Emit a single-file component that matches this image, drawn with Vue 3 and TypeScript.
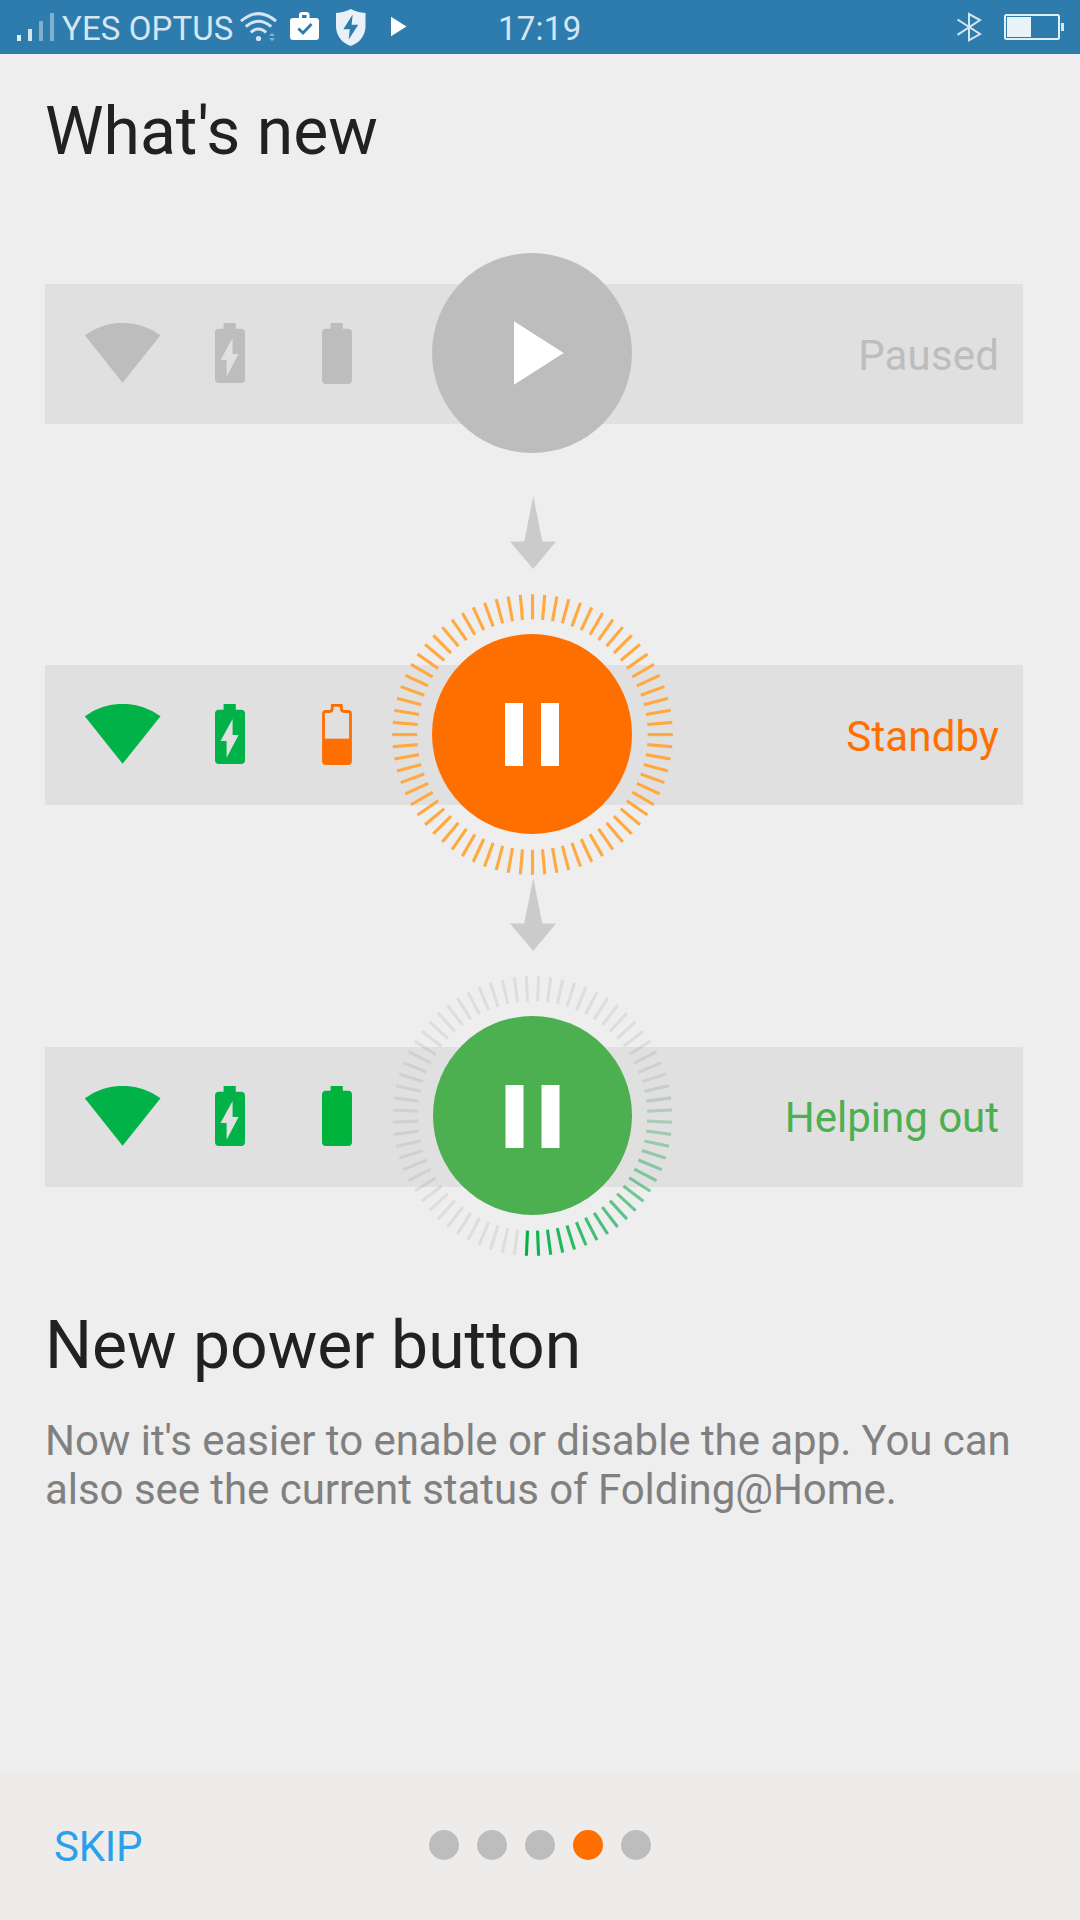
<script setup lang="ts">
type State = 'paused' | 'standby' | 'active'

interface Row {
  state: State
  label: string
  color: string
  wifi: string
  charge: string
  battery: string
  cy: number
  r: number
  dx: number
}

interface Tick {
  angle: number
  color: string
  opacity: number
}

const GREEN = '#00b248'
const GREY = '#bdbdbd'

const rows: Row[] = [
  { state: 'paused', label: 'Paused', color: GREY, wifi: GREY, charge: GREY, battery: GREY, cy: 140, r: 100, dx: 0 },
  { state: 'standby', label: 'Standby', color: '#ff6f00', wifi: GREEN, charge: GREEN, battery: '#ff6f00', cy: 140, r: 100, dx: 0 },
  { state: 'active', label: 'Helping out', color: '#4caf50', wifi: GREEN, charge: GREEN, battery: '#00b33c', cy: 139.5, r: 99.5, dx: 0.5 },
]

const standbyTicks: Tick[] = Array.from({ length: 72 }, (_, i) => ({ angle: i * 5, color: '#ffa940', opacity: 1 }))

// Grey base ring, with a green tail fading counter-clockwise from the bottom.
const baseTicks: Tick[] = Array.from({ length: 72 }, (_, i) => ({ angle: i * 5 + 2.5, color: '#000', opacity: 0.07 }))
const tailTicks: Tick[] = Array.from({ length: 22 }, (_, i) => ({ angle: 182.5 - i * 5, color: GREEN, opacity: 1 - i / 22 }))
const activeTicks: Tick[] = [...baseTicks.filter((t) => t.angle < 75 || t.angle > 183), ...tailTicks,
  ...baseTicks.filter((t) => t.angle >= 75 && t.angle <= 183).map((t) => ({ ...t, opacity: 0.07 * ((183 - t.angle) / 108) }))]

function ticksFor(state: State): Tick[] {
  if (state === 'standby') return standbyTicks
  if (state === 'active') return activeTicks
  return []
}

const pages = [0, 1, 2, 3, 4]
const currentPage = 3
</script>

<template>
  <div class="screen">
    <header class="status">
      <svg class="signal" width="38" height="54" viewBox="0 0 38 54">
        <rect x="0" y="35" width="4" height="6" fill="#e3eef5" />
        <rect x="11" y="29" width="4" height="12" fill="#d6e6f0" />
        <rect x="22" y="21" width="4" height="20" fill="#7fb0cf" />
        <rect x="33" y="13" width="4" height="28" fill="#7fb0cf" />
      </svg>
      <span class="carrier">YES OPTUS</span>
      <svg class="wifi-status" width="38" height="54" viewBox="240 0 38 54" fill="none" stroke="#d5e6f1" stroke-width="3">
        <path d="M241 21.2Q258.500 6 276 21.200" />
        <path d="M245.800 26.600Q258.500 15.900 271.200 26.600" />
        <path d="M250.800 32.300Q258.500 25.600 266.200 32.300" />
        <circle cx="258.500" cy="38.500" r="2.600" fill="#d5e6f1" stroke="none" />
        <path d="M269 36l3-3.200 3 3.200zM269 38l3 3.200 3-3.200z" fill="#7fb0cf" stroke="none" />
      </svg>
      <svg class="bag" width="29" height="54" viewBox="290 0 29 54">
        <path fill="#fff" fill-rule="evenodd" d="M299 18v-3q0-3 3-3h4.500q3 0 3 3v3h6.500q3 0 3 3v16q0 3-3 3h-23q-3 0-3-3v-16q0-3 3-3zM302 18h4.500v-3h-4.500z" />
        <path d="M298.300 28.500l4.700 4.500 8.500-9" fill="none" stroke="#2e7cad" stroke-width="2.800" />
      </svg>
      <svg class="shield" width="30" height="54" viewBox="336 0 30 54">
        <path fill="#e9f0f7" d="M350.700 9Q357 12.500 365.500 13v14C365 36.500 358.500 43.500 350.700 46C343 43.500 336.500 36.500 336 27V13Q344.500 12.500 350.700 9z" />
        <path fill="#2e7cad" d="M352.700 14.500L343.300 29.200H349.800L348.700 39.500L358.300 24.800H351.600z" />
      </svg>
      <svg class="play-status" width="16" height="54" viewBox="391 0 16 54"><path fill="#fff" d="M391 16.800L406.500 26.500L391 36.300z" /></svg>
      <span class="clock">17:19</span>
      <svg class="bluetooth" width="26" height="54" viewBox="956 0 26 54">
        <path d="M957.500 19.500L980 34L969 40.300V14L980 20L957.500 34.800" fill="none" stroke="#d5e6f1" stroke-width="2" />
      </svg>
      <svg class="power" width="62" height="54" viewBox="1003 0 62 54">
        <rect x="1005" y="15" width="54" height="24" rx="1.500" fill="none" stroke="#e3eef6" stroke-width="2" />
        <rect x="1007" y="17" width="24" height="20" fill="#e9f1f9" />
        <rect x="1061" y="23" width="3" height="8" fill="#d5e6f1" />
      </svg>
    </header>

    <main class="content">
      <h1>What's new</h1>

      <section class="states">
        <template v-for="(row, i) in rows" :key="row.state">
          <div class="row">
            <svg class="icons" width="272" height="62" viewBox="85 323 272 62">
              <path :fill="row.wifi" d="M84.800 335.300A63.800 63.800 0 0 1 160.500 335.300L122.600 382.800z" />
              <path :fill="row.charge" fill-rule="evenodd" d="M223.600 323h12.200v5.800h5.200q4 0 4 4V379q0 4-4 4H219q-4 0-4-4V332.800q0-4 4-4h4.600zM232.600 338L220.500 360H226.600V376.800L238.600 354H232.600z" />
              <g v-if="row.state === 'standby'">
                <path fill="none" :stroke="row.battery" stroke-width="2.800" d="M332.300 324.400h9v2.600q0 3.500 3 3.500h4q2.200 0 2.200 2.200V380q0 2.500-2.500 2.500H326q-2.500 0-2.500-2.500V332.700q0-2.200 2.200-2.200h4q2.600 0 2.600-3.500z" />
                <rect x="323" y="357.700" width="28" height="24.500" :fill="row.battery" />
              </g>
              <path v-else :fill="row.battery" :transform="row.state === 'active' ? 'translate(0 -1)' : undefined" d="M330.600 323h12.200v5.800h5.200q4 0 4 4V380q0 4-4 4H326q-4 0-4-4V332.800q0-4 4-4h4.600z" />
            </svg>

            <svg class="dial" width="282" height="282" viewBox="0 0 282 282">
              <line
                v-for="(t, n) in ticksFor(row.state)"
                :key="n"
                x1="141.500"
                x2="141.500"
                y1="0.300"
                y2="25.400"
                :stroke="t.color"
                :stroke-opacity="t.opacity"
                stroke-width="3.100"
                :transform="`rotate(${t.angle} 141.500 ${row.cy + 0.6})`"
              />
              <circle :cx="141 + row.dx" :cy="row.cy" :r="row.r" :fill="row.color" />
              <path v-if="row.state === 'paused'" fill="#fff" d="M123 108.300L172.700 140L123 171.700z" />
              <path v-else fill="#fff" :transform="`translate(${row.dx} 0)`" d="M114 109h18v63h-18zM150 109h18v63h-18z" />
            </svg>

            <span class="label" :class="row.state" :style="{ color: row.color }">{{ row.label }}</span>
          </div>
          <div v-if="i < rows.length - 1" class="between">
            <svg width="46" height="73" viewBox="0 0 46 73"><path fill="#cbcbcb" d="M23.300 0L32.300 45.500H46L23.200 73L0 45.500H14.200z" /></svg>
          </div>
        </template>
      </section>

      <h2>New power button</h2>
      <p>Now it's easier to enable or disable the app. You can<br />also see the current status of Folding@Home.</p>
    </main>

    <footer class="footer">
      <span class="skip">SKIP</span>
      <div class="dots">
        <i v-for="p in pages" :key="p" :class="{ on: p === currentPage }"></i>
      </div>
    </footer>
  </div>
</template>

<style>
body {
  margin: 0;
}
</style>

<style scoped>
.screen {
  display: flex;
  flex-direction: column;
  width: 1080px;
  height: 1920px;
  overflow: hidden;
  background: #eee;
  color: #212121;
  font-family: Roboto, sans-serif;
}
svg {
  display: block;
  flex: none;
}
.status {
  display: flex;
  flex: none;
  height: 54px;
  padding-left: 17px;
  background: #2e7cad;
  color: #d5e6f1;
  font-size: 33px;
  line-height: 58px;
  white-space: nowrap;
}
.carrier {
  width: 178px;
  margin-left: 7px;
  letter-spacing: 0.1px;
}
.bag {
  margin-left: 12px;
}
.shield {
  margin-left: 17px;
}
.play-status {
  margin-left: 25px;
}
.clock {
  width: 90px;
  margin-left: 91px;
  letter-spacing: 0.25px;
}
.bluetooth {
  margin-left: 368px;
}
.power {
  margin-left: 21px;
}
.content {
  flex: 1;
  padding: 39px 45px 0;
}
h1,
h2 {
  margin: 0;
  font-size: 66px;
  font-weight: 400;
  line-height: 78px;
}
.states {
  width: 978px;
  padding-top: 113px;
}
.row {
  display: flex;
  align-items: center;
  box-sizing: border-box;
  height: 140px;
  padding: 0 24px 0 40px;
  background: #e0e0e0;
}
.icons {
  margin-right: 34px;
}
.dial {
  position: relative;
  overflow: visible;
}
.label {
  flex: 1;
  padding-top: 3px;
  font-size: 42px;
  line-height: 49px;
  text-align: right;
  white-space: nowrap;
}
.label.paused,
.label.standby {
  letter-spacing: 0.150px;
}
.label.active {
  padding-top: 1px;
}
.between {
  box-sizing: border-box;
  height: 241.300px;
  padding: 72.300px 0 0 464.700px;
}
h2 {
  margin-top: 120px;
}
p {
  margin: 31px 0 0;
  color: #808080;
  font-size: 42px;
  line-height: 49px;
  letter-spacing: -0.045px;
  white-space: nowrap;
}
.footer {
  display: flex;
  flex: none;
  height: 150px;
  background: #edecea;
}
.skip {
  box-sizing: border-box;
  width: 429px;
  padding: 52px 0 0 54px;
  color: #2aa0ea;
  font-size: 42px;
  line-height: 49px;
  letter-spacing: -0.250px;
}
.dots {
  display: flex;
  gap: 18px;
  padding-top: 60px;
}
.dots i {
  width: 30px;
  height: 30px;
  border-radius: 50%;
  background: #bdbdbd;
}
.dots .on {
  background: #ff6f00;
}
</style>
